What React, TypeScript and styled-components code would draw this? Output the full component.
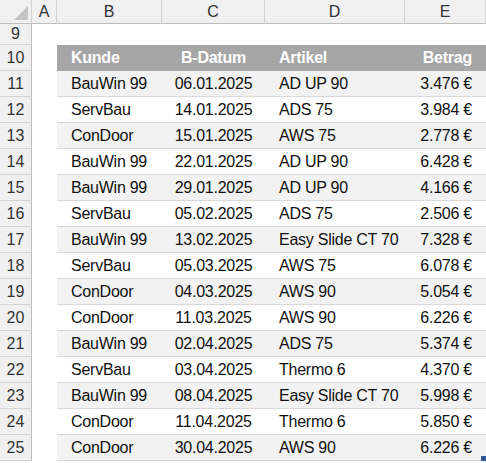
import React from "react";
import styled, { createGlobalStyle } from "styled-components";

const G = createGlobalStyle`
  body { margin: 0; background: #fff; font-family: "Liberation Sans", Arial, sans-serif; }
`;
const cols = "32px 25px 105px 103px 140px 81px";
const Sheet = styled.div`
  display: grid; grid-template-columns: ${cols};
  grid-auto-rows: 26px; grid-template-rows: 24px 21px; width: 486px;
`;
const ColHead = styled.div`
  background: #f0f0f0; border-right: 1px solid #d4d4d4; border-bottom: 1px solid #bdbdbd;
  display: flex; align-items: center; justify-content: center; font-size: 16px; color: #333;
`;
const Corner = styled(ColHead)`position: relative;
  &::after { content: ""; position: absolute; right: 3px; bottom: 3px; border-left: 14px solid transparent; border-bottom: 14px solid #c4c4c4; }`;
const RowHead = styled.div`
  background: #f0f0f0; border-right: 1px solid #bdbdbd; border-bottom: 1px solid #d4d4d4;
  display: flex; align-items: center; justify-content: center; font-size: 16px; color: #333;
`;
const Blank = styled.div``;
const Cell = styled.div<{ $bg: string; $right?: boolean; $head?: boolean }>`
  background: ${p => p.$bg}; color: ${p => (p.$head ? "#fff" : "#111")};
  font-weight: ${p => (p.$head ? 700 : 400)}; font-size: 16px;
  display: flex; align-items: center; justify-content: ${p => (p.$right ? "flex-end" : "flex-start")};
  padding: 0 ${p => (p.$right ? "14px" : "0")} 0 ${p => (p.$right ? "0" : "14px")};
  border-bottom: 1px solid ${p => (p.$head ? "#a6a6a6" : "#d9d9d9")}; position: relative;
  white-space: nowrap; letter-spacing: -0.25px;
`;
const CenterCell = styled(Cell)`justify-content: center; padding: 0;`;
const Handle = styled.span`position: absolute; right: 0; bottom: -1px; width: 5px; height: 5px; background: #2f5597;`;

const data = [
  ["BauWin 99","06.01.2025","AD UP 90","3.476 €"],
  ["ServBau","14.01.2025","ADS 75","3.984 €"],
  ["ConDoor","15.01.2025","AWS 75","2.778 €"],
  ["BauWin 99","22.01.2025","AD UP 90","6.428 €"],
  ["BauWin 99","29.01.2025","AD UP 90","4.166 €"],
  ["ServBau","05.02.2025","ADS 75","2.506 €"],
  ["BauWin 99","13.02.2025","Easy Slide CT 70","7.328 €"],
  ["ServBau","05.03.2025","AWS 75","6.078 €"],
  ["ConDoor","04.03.2025","AWS 90","5.054 €"],
  ["ConDoor","11.03.2025","AWS 90","6.226 €"],
  ["BauWin 99","02.04.2025","ADS 75","5.374 €"],
  ["ServBau","03.04.2025","Thermo 6","4.370 €"],
  ["BauWin 99","08.04.2025","Easy Slide CT 70","5.998 €"],
  ["ConDoor","11.04.2025","Thermo 6","5.850 €"],
  ["ConDoor","30.04.2025","AWS 90","6.226 €"],
];

export default function App() {
  return (
    <Sheet>
      <G />
      <Corner />
      {["A","B","C","D","E"].map(c => <ColHead key={c}>{c}</ColHead>)}
      <RowHead>9</RowHead>
      <Blank /><Blank /><Blank /><Blank /><Blank />
      <RowHead>10</RowHead>
      <Blank />
      <Cell $bg="#a6a6a6" $head>Kunde</Cell>
      <CenterCell $bg="#a6a6a6" $head>B-Datum</CenterCell>
      <Cell $bg="#a6a6a6" $head>Artikel</Cell>
      <Cell $bg="#a6a6a6" $head $right>Betrag</Cell>
      {data.map((r, i) => {
        const bg = i % 2 === 0 ? "#f2f2f2" : "#ffffff";
        const last = i === data.length - 1;
        return (
          <React.Fragment key={i}>
            <RowHead>{11 + i}</RowHead>
            <Blank />
            <Cell $bg={bg}>{r[0]}</Cell>
            <CenterCell $bg={bg}>{r[1]}</CenterCell>
            <Cell $bg={bg}>{r[2]}</Cell>
            <Cell $bg={bg} $right>{r[3]}{last && <Handle />}</Cell>
          </React.Fragment>
        );
      })}
    </Sheet>
  );
}
